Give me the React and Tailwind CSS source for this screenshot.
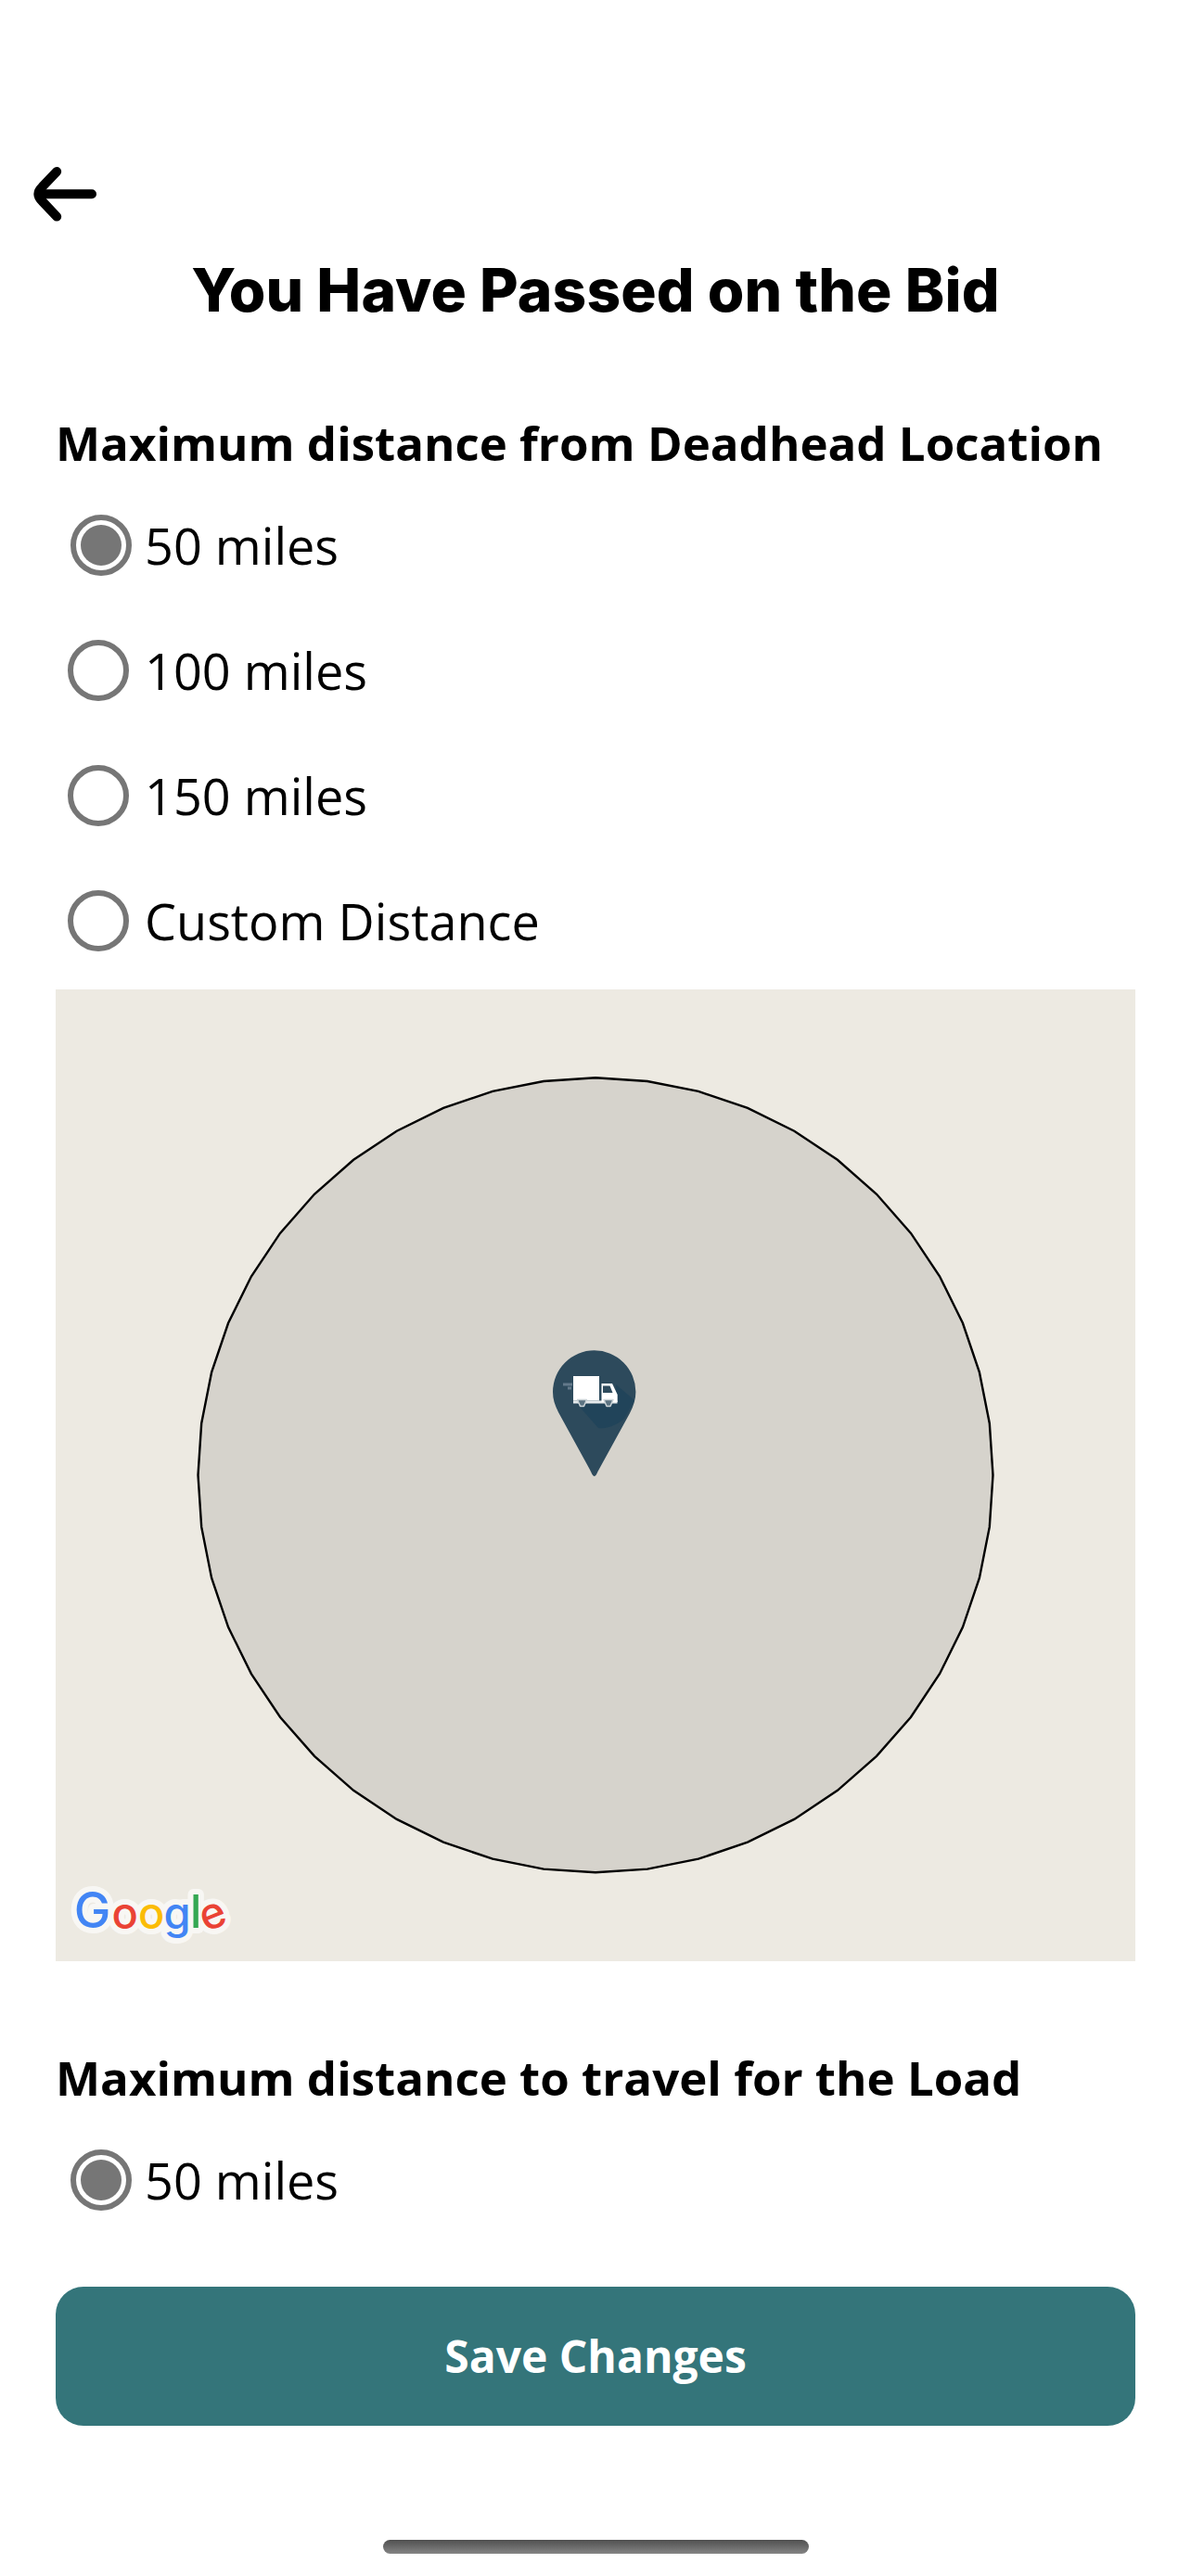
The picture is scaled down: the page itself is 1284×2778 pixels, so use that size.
import { useState } from "react";

const DISTANCES = ["50 miles", "100 miles", "150 miles", "Custom Distance"];

const LOGO = [
  { char: "G", x: 99.5, y: 2079.2, size: 53, weight: 500, fill: "#4285f4" },
  { char: "o", x: 134.6, y: 2079.6, size: 47, weight: 550, fill: "#ea4335" },
  { char: "o", x: 163.2, y: 2079.6, size: 47, weight: 550, fill: "#fbbc05" },
  { char: "g", x: 191, y: 2080, size: 47, weight: 550, fill: "#4285f4" },
  { char: "l", x: 211.3, y: 2079, size: 49, weight: 550, fill: "#34a853" },
  { char: "e", x: 229.8, y: 2079.6, size: 47, weight: 550, fill: "#ea4335", rotate: -22 },
];

const radiusPoints = Array.from({ length: 48 }, (_, i) => {
  const a = (i * 7.5 * Math.PI) / 180;
  return `${(642 + 428.5 * Math.sin(a)).toFixed(1)},${(1590.8 - 428.5 * Math.cos(a)).toFixed(1)}`;
}).join(" ");

function BackArrow() {
  return (
    <svg className="w-[68px] h-[60px]" viewBox="36 179 68 60" fill="none" stroke="#000" strokeWidth="10" strokeLinecap="round" strokeLinejoin="round">
      <path d="M99 209.2H43" />
      <path d="M61.2 185L45.5 201.5C40 207 40 211.5 45.5 217L61.2 233.6" />
    </svg>
  );
}

function Radio({ checked }) {
  if (checked) {
    return (
      <span className="ml-4 flex size-[66px] shrink-0 items-center justify-center rounded-full border-6 border-[#767676]">
        <span className="size-11 shrink-0 rounded-full bg-[#767676]" />
      </span>
    );
  }
  return <span className="ml-[13px] mr-[3px] size-[66px] shrink-0 rounded-full border-6 border-[#767676]" />;
}

function Option({ label, checked, onSelect }) {
  return (
    <button onClick={onSelect} className="flex h-[66px] items-center text-left">
      <Radio checked={checked} />
      <span className="ml-3.5 whitespace-nowrap text-[54px] leading-[66px]">{label}</span>
    </button>
  );
}

function Logo() {
  const letters = LOGO.map(({ char, x, y, size, weight, fill, rotate }, i) => (
    <text key={i} x={x} y={y} fontSize={size} fontWeight={weight} fill={fill} transform={rotate ? `rotate(${rotate} ${x} 2067)` : undefined}>
      {char}
    </text>
  ));
  return (
    <g fontFamily="Inter, sans-serif" textAnchor="middle">
      <g opacity="0.65" stroke="#fff" strokeWidth="12" strokeLinejoin="round" className="[&>text]:fill-white">
        {letters}
      </g>
      {letters}
    </g>
  );
}

function TruckPin() {
  return (
    <g>
      <path d="M640.7 1592C639 1592 637.5 1588 636 1585L602 1523C598 1515 596 1509 596 1501A44.7 44.7 0 0 1 685.4 1501C685.4 1509 683 1516 679 1524L645 1586C643.5 1589 642.3 1592 640.7 1592Z" fill="#2d4a5c" />
      <path d="M622 1514L645 1540C655 1542 667 1535 673 1530L684 1510L664 1493V1514Z" fill="#21445a" />
      <path d="M607 1493H617M612 1497H616" stroke="#63798a" strokeWidth="3" />
      <path d="M618 1484H646V1510.5H618Z" fill="#fff" />
      <path d="M618 1510.5H665.5V1513.5H618Z" fill="#e6eaec" />
      <path d="M648.5 1492H660L665.7 1504V1512H648.5Z" fill="#fff" />
      <path d="M650 1494.5H657.5L660.5 1502H650Z" fill="#2d4a5c" />
      <path d="M622.5 1509.5H632.5L629.5 1516.5H625.5Z M651 1509.5H661L658 1516.5H654Z" fill="#5b7382" stroke="#ccd4d8" strokeWidth="1.5" strokeLinejoin="round" />
    </g>
  );
}

function RadiusMap() {
  return (
    <div className="mx-[60px] mt-[41px] h-[1048px] bg-[#edeae2]">
      <svg className="block size-full" viewBox="60 1067 1164 1048">
        <polygon points={radiusPoints} fill="#d6d3cc" stroke="#000" strokeWidth="2.4" />
        <TruckPin />
        <Logo />
      </svg>
    </div>
  );
}

export default function App() {
  const [pickup, setPickup] = useState("50 miles");

  return (
    <div className="flex h-[2778px] w-[1284px] flex-col overflow-hidden bg-white font-['Open_Sans',sans-serif] text-black">
      <header className="pt-[179px]">
        <button className="ml-9 block">
          <BackArrow />
        </button>
        <h1 className="mt-[35px] whitespace-nowrap text-center font-['Inter',sans-serif] text-[64px] font-extrabold leading-[78px] tracking-[0.13px]">
          You Have Passed on the Bid
        </h1>
      </header>

      <section className="mt-[91px] pl-[60px]">
        <h2 className="whitespace-nowrap text-[51px] font-bold leading-[68px]">Maximum distance from Deadhead Location</h2>
        <div className="mt-[44px] flex flex-col gap-[69px]">
          {DISTANCES.map((label) => (
            <Option key={label} label={label} checked={pickup === label} onSelect={() => setPickup(label)} />
          ))}
        </div>
      </section>

      <RadiusMap />

      <section className="mt-[91px] pl-[60px]">
        <h2 className="whitespace-nowrap text-[51px] font-bold leading-[68px]">Maximum distance to travel for the Load</h2>
        <div className="mt-[44px]">
          <Option label="50 miles" checked />
        </div>
      </section>

      <button className="mx-[60px] mt-[82px] h-[150px] shrink-0 rounded-[30px] bg-[#34757a] text-[48px] font-bold leading-[66px] text-white">
        Save Changes
      </button>

      <div className="mx-auto mt-[123px] h-[15px] w-[459px] shrink-0 rounded-full bg-linear-to-b from-[#505050] to-[#858585]" />
    </div>
  );
}
